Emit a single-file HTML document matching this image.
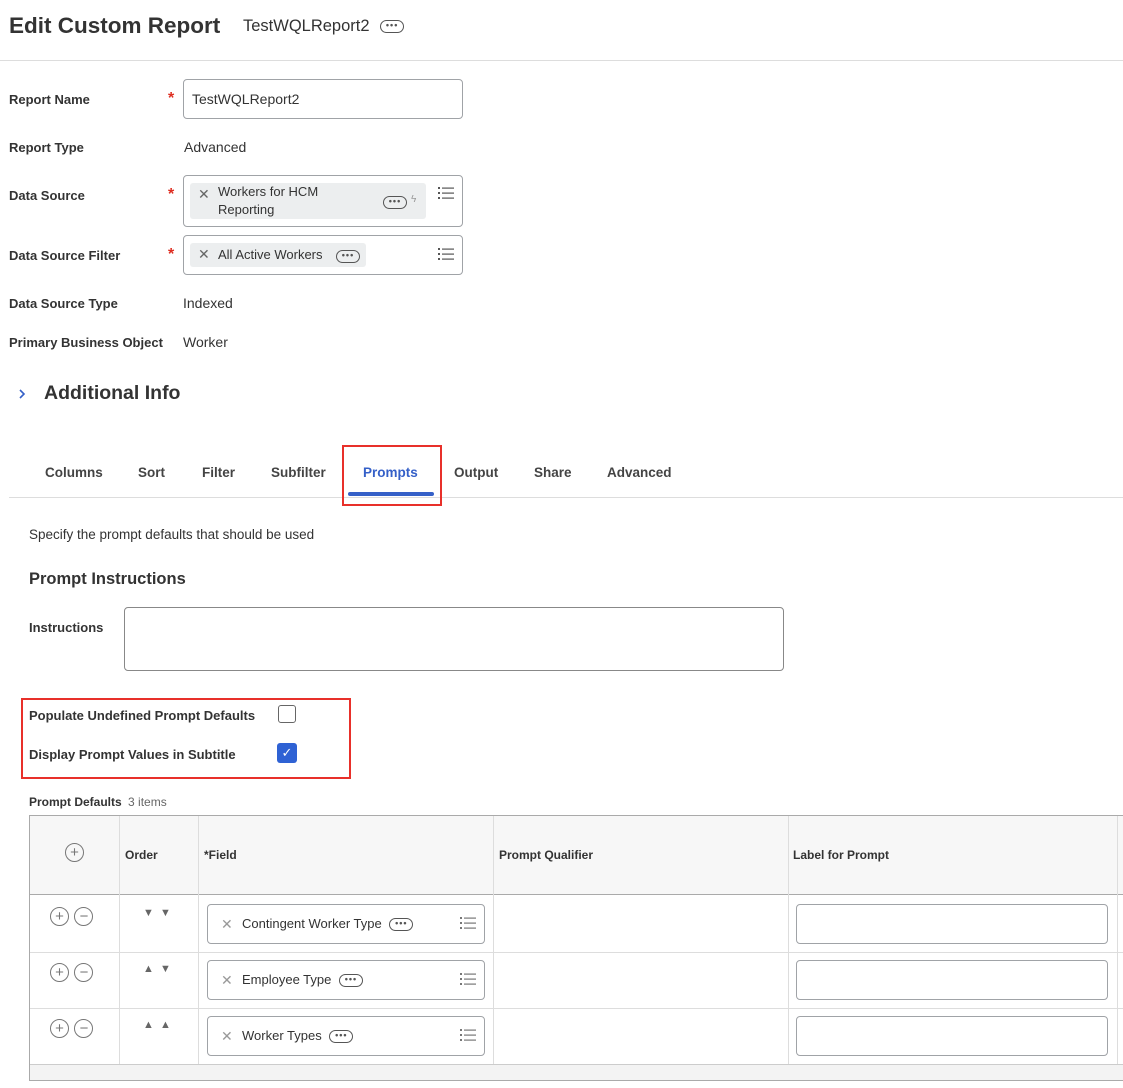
<!DOCTYPE html>
<html><head><meta charset="utf-8"><style>
*{box-sizing:border-box;margin:0;padding:0}
body{width:1123px;height:1088px;background:#fff;font-family:"Liberation Sans",Arial,sans-serif;color:#333;position:relative;overflow:hidden}
.a{position:absolute}
.lbl{font-size:13px;font-weight:bold;color:#333}
.val{font-size:14px;color:#333}
.star{color:#de2e21;font-size:16px;font-weight:bold}
.box{border:1px solid #a0a3a7;border-radius:4px;background:#fff}
.pill{background:#eceeef;border-radius:3px}
.dots{display:inline-block;border:1.3px solid #555;border-radius:8px;width:24px;height:13px;text-align:center;font-size:9px;line-height:9px;letter-spacing:1px;font-weight:bold;color:#555;vertical-align:middle}
.x{color:#666;font-size:14px}
.th{font-size:12px;font-weight:bold;color:#333}
.circ{display:inline-block;width:19px;height:19px;border:1.3px solid #777;border-radius:50%;text-align:center;line-height:17px;font-size:15px;color:#777}
.tab{position:absolute;top:465px;font-size:13.5px;font-weight:bold;color:#444}
</style></head><body>
<div class="a" style="left:9px;top:13px;font-size:22.5px;font-weight:bold;color:#333">Edit Custom Report</div>
<div class="a" style="left:243px;top:17px;font-size:16.5px;color:#333">TestWQLReport2 <span class="dots" style="margin-left:6px">•••</span></div>
<div class="a" style="left:0;top:60px;width:1123px;height:1px;background:#ddd"></div>

<div class="a lbl" style="left:9px;top:92px">Report Name</div>
<div class="a star" style="left:168px;top:90px">*</div>
<div class="a box" style="left:183px;top:79px;width:280px;height:40px"></div>
<div class="a val" style="left:192px;top:91px">TestWQLReport2</div>

<div class="a lbl" style="left:9px;top:140px">Report Type</div>
<div class="a val" style="left:184px;top:139px">Advanced</div>

<div class="a lbl" style="left:9px;top:188px">Data Source</div>
<div class="a star" style="left:168px;top:186px">*</div>
<div class="a box" style="left:183px;top:175px;width:280px;height:52px"></div>
<div class="a pill" style="left:190px;top:183px;width:236px;height:36px"></div>
<div class="a x" style="left:198px;top:186px">✕</div>
<div class="a" style="left:218px;top:183px;font-size:13px;line-height:18px;color:#333">Workers for HCM<br>Reporting</div>
<div class="a" style="left:383px;top:194px"><span class="dots">•••</span></div>
<div class="a" style="left:411px;top:194px;font-size:10px;color:#999">ϟ</div>
<svg class="a" style="left:438px;top:187px" width="16" height="13"><g fill="#555"><rect x="0" y="0" width="2" height="2"/><rect x="4" y="0.5" width="12" height="1.2"/><rect x="0" y="5" width="2" height="2"/><rect x="4" y="5.5" width="12" height="1.2"/><rect x="0" y="10" width="2" height="2"/><rect x="4" y="10.5" width="12" height="1.2"/></g></svg>

<div class="a lbl" style="left:9px;top:248px">Data Source Filter</div>
<div class="a star" style="left:168px;top:246px">*</div>
<div class="a box" style="left:183px;top:235px;width:280px;height:40px"></div>
<div class="a pill" style="left:190px;top:243px;width:176px;height:24px"></div>
<div class="a x" style="left:198px;top:246px">✕</div>
<div class="a" style="left:218px;top:247px;font-size:13px;color:#333">All Active Workers</div>
<div class="a" style="left:336px;top:248px"><span class="dots">•••</span></div>
<svg class="a" style="left:438px;top:248px" width="16" height="13"><g fill="#555"><rect x="0" y="0" width="2" height="2"/><rect x="4" y="0.5" width="12" height="1.2"/><rect x="0" y="5" width="2" height="2"/><rect x="4" y="5.5" width="12" height="1.2"/><rect x="0" y="10" width="2" height="2"/><rect x="4" y="10.5" width="12" height="1.2"/></g></svg>

<div class="a lbl" style="left:9px;top:296px">Data Source Type</div>
<div class="a val" style="left:183px;top:295px">Indexed</div>
<div class="a lbl" style="left:9px;top:335px">Primary Business Object</div>
<div class="a val" style="left:183px;top:334px">Worker</div>

<svg class="a" style="left:17px;top:388px" width="10" height="12"><path d="M3 2 L7 6 L3 10" stroke="#3560c8" stroke-width="1.6" fill="none"/></svg>
<div class="a" style="left:44px;top:382px;font-size:19.5px;font-weight:bold;color:#333">Additional Info</div>

<div class="tab" style="left:45px">Columns</div>
<div class="tab" style="left:138px">Sort</div>
<div class="tab" style="left:202px">Filter</div>
<div class="tab" style="left:271px">Subfilter</div>
<div class="tab" style="left:363px;color:#3560c8">Prompts</div>
<div class="tab" style="left:454px">Output</div>
<div class="tab" style="left:534px">Share</div>
<div class="tab" style="left:607px">Advanced</div>
<div class="a" style="left:9px;top:497px;width:1114px;height:1px;background:#ddd"></div>
<div class="a" style="left:348px;top:492px;width:86px;height:4px;background:#3560c8;border-radius:2px"></div>
<div class="a" style="left:342px;top:445px;width:100px;height:61px;border:2px solid #e8302a"></div>

<div class="a" style="left:29px;top:527px;font-size:13.5px;color:#333">Specify the prompt defaults that should be used</div>
<div class="a" style="left:29px;top:570px;font-size:16.5px;font-weight:bold;color:#333">Prompt Instructions</div>
<div class="a lbl" style="left:29px;top:620px">Instructions</div>
<div class="a box" style="left:124px;top:607px;width:660px;height:64px;border-color:#888"></div>

<div class="a lbl" style="left:29px;top:708px">Populate Undefined Prompt Defaults</div>
<div class="a" style="left:278px;top:705px;width:18px;height:18px;border:1.3px solid #666;border-radius:3px"></div>
<div class="a lbl" style="left:29px;top:747px">Display Prompt Values in Subtitle</div>
<div class="a" style="left:277px;top:743px;width:20px;height:20px;background:#2f62d4;border-radius:3px;color:#fff;font-size:13px;text-align:center;line-height:20px">✓</div>
<div class="a" style="left:21px;top:698px;width:330px;height:81px;border:2px solid #e8302a"></div>

<div class="a" style="left:29px;top:795px;font-size:12px;font-weight:bold;color:#333">Prompt Defaults <span style="font-weight:normal;color:#666;margin-left:3px">3 items</span></div>

<div class="a" style="left:29px;top:815px;width:1094px;height:266px;border:1px solid #aaa;border-right:none;background:#fff"></div>
<div class="a" style="left:30px;top:816px;width:1093px;height:79px;background:#f7f7f7;border-bottom:1px solid #aaa"></div>
<div class="a" style="left:30px;top:1064px;width:1093px;height:16px;background:#f3f3f3;border-top:1px solid #ccc"></div>
<div class="a" style="left:30px;top:952px;width:1093px;height:1px;background:#ddd"></div>
<div class="a" style="left:30px;top:1008px;width:1093px;height:1px;background:#ddd"></div>
<div class="a" style="left:119px;top:816px;width:1px;height:248px;background:#ddd"></div>
<div class="a" style="left:198px;top:816px;width:1px;height:248px;background:#ddd"></div>
<div class="a" style="left:493px;top:816px;width:1px;height:248px;background:#ddd"></div>
<div class="a" style="left:788px;top:816px;width:1px;height:248px;background:#ddd"></div>
<div class="a" style="left:1117px;top:816px;width:1px;height:248px;background:#ddd"></div>

<div class="a" style="left:65px;top:843px"><span class="circ">+</span></div>
<div class="a th" style="left:125px;top:848px">Order</div>
<div class="a th" style="left:204px;top:848px">*Field</div>
<div class="a th" style="left:499px;top:848px">Prompt Qualifier</div>
<div class="a th" style="left:793px;top:848px">Label for Prompt</div>

<div class="a" style="left:50px;top:907px"><span class="circ">+</span> <span class="circ" style="margin-left:1px">−</span></div>
<div class="a" style="left:143px;top:907px;font-size:11px;color:#666">▼&nbsp;&nbsp;▼</div>
<div class="a box" style="left:207px;top:904px;width:278px;height:40px"></div>
<div class="a x" style="left:221px;top:916px;color:#999">✕</div>
<div class="a" style="left:242px;top:916px;font-size:13px;color:#333">Contingent Worker Type <span class="dots" style="margin-left:4px">•••</span></div>
<svg class="a" style="left:460px;top:917px" width="16" height="13"><g fill="#777"><rect x="0" y="0" width="2" height="2"/><rect x="4" y="0.5" width="12" height="1.2"/><rect x="0" y="5" width="2" height="2"/><rect x="4" y="5.5" width="12" height="1.2"/><rect x="0" y="10" width="2" height="2"/><rect x="4" y="10.5" width="12" height="1.2"/></g></svg>
<div class="a box" style="left:796px;top:904px;width:312px;height:40px"></div>

<div class="a" style="left:50px;top:963px"><span class="circ">+</span> <span class="circ" style="margin-left:1px">−</span></div>
<div class="a" style="left:143px;top:963px;font-size:11px;color:#666">▲&nbsp;&nbsp;▼</div>
<div class="a box" style="left:207px;top:960px;width:278px;height:40px"></div>
<div class="a x" style="left:221px;top:972px;color:#999">✕</div>
<div class="a" style="left:242px;top:972px;font-size:13px;color:#333">Employee Type <span class="dots" style="margin-left:4px">•••</span></div>
<svg class="a" style="left:460px;top:973px" width="16" height="13"><g fill="#777"><rect x="0" y="0" width="2" height="2"/><rect x="4" y="0.5" width="12" height="1.2"/><rect x="0" y="5" width="2" height="2"/><rect x="4" y="5.5" width="12" height="1.2"/><rect x="0" y="10" width="2" height="2"/><rect x="4" y="10.5" width="12" height="1.2"/></g></svg>
<div class="a box" style="left:796px;top:960px;width:312px;height:40px"></div>

<div class="a" style="left:50px;top:1019px"><span class="circ">+</span> <span class="circ" style="margin-left:1px">−</span></div>
<div class="a" style="left:143px;top:1019px;font-size:11px;color:#666">▲&nbsp;&nbsp;▲</div>
<div class="a box" style="left:207px;top:1016px;width:278px;height:40px"></div>
<div class="a x" style="left:221px;top:1028px;color:#999">✕</div>
<div class="a" style="left:242px;top:1028px;font-size:13px;color:#333">Worker Types <span class="dots" style="margin-left:4px">•••</span></div>
<svg class="a" style="left:460px;top:1029px" width="16" height="13"><g fill="#777"><rect x="0" y="0" width="2" height="2"/><rect x="4" y="0.5" width="12" height="1.2"/><rect x="0" y="5" width="2" height="2"/><rect x="4" y="5.5" width="12" height="1.2"/><rect x="0" y="10" width="2" height="2"/><rect x="4" y="10.5" width="12" height="1.2"/></g></svg>
<div class="a box" style="left:796px;top:1016px;width:312px;height:40px"></div>
</body></html>
